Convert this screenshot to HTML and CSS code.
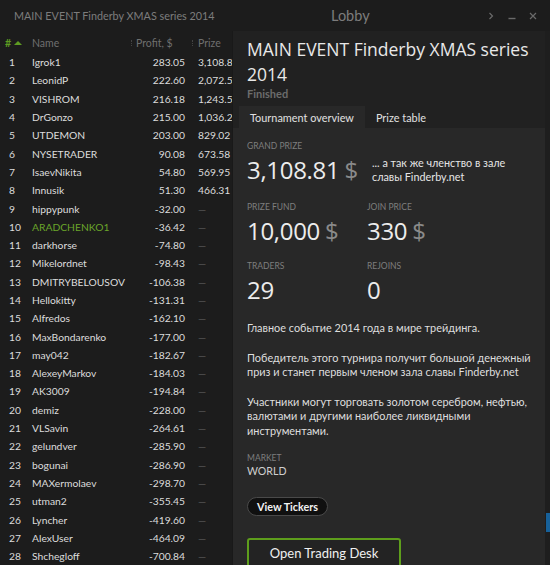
FILE: index.html
```html
<!DOCTYPE html>
<html lang="ru">
<head>
<meta charset="utf-8">
<title>Lobby</title>
<link rel="stylesheet" href="styles.css">
</head>
<body>
<div class="window">
  <header class="titlebar">
    <span class="tb-title">MAIN EVENT Finderby XMAS series 2014</span>
    <span class="tb-lobby">Lobby</span>
    <span class="tb-controls">
      <svg class="ctl" width="10" height="10" viewBox="0 0 10 10"><path d="M3.5 2 L6.5 5 L3.5 8" fill="none" stroke="#6a6a6a" stroke-width="1.2"/></svg>
      <svg class="ctl" width="10" height="10" viewBox="0 0 10 10"><path d="M1.5 7.5 H8.5" fill="none" stroke="#6a6a6a" stroke-width="1.4"/></svg>
      <svg class="ctl" width="10" height="10" viewBox="0 0 10 10"><path d="M2 2 L8 8 M8 2 L2 8" fill="none" stroke="#6a6a6a" stroke-width="1.2"/></svg>
    </span>
  </header>
  <div class="main">
    <section class="list">
      <div class="row head">
        <span class="c-num"><span class="hash">#</span><span class="tri"></span></span>
        <span class="c-name sep">Name</span>
        <span class="c-profit sep">Profit, $</span>
        <span class="c-prize sep">Prize</span>
      </div>
      <div class="row"><span class="c-num">1</span><span class="c-name">Igrok1</span><span class="c-profit">283.05</span><span class="c-prize">3,108.81</span></div>
      <div class="row"><span class="c-num">2</span><span class="c-name">LeonidP</span><span class="c-profit">222.60</span><span class="c-prize">2,072.54</span></div>
      <div class="row"><span class="c-num">3</span><span class="c-name">VISHROM</span><span class="c-profit">216.18</span><span class="c-prize">1,243.52</span></div>
      <div class="row"><span class="c-num">4</span><span class="c-name">DrGonzo</span><span class="c-profit">215.00</span><span class="c-prize">1,036.27</span></div>
      <div class="row"><span class="c-num">5</span><span class="c-name">UTDEMON</span><span class="c-profit">203.00</span><span class="c-prize">829.02</span></div>
      <div class="row"><span class="c-num">6</span><span class="c-name">NYSETRADER</span><span class="c-profit">90.08</span><span class="c-prize">673.58</span></div>
      <div class="row"><span class="c-num">7</span><span class="c-name">IsaevNikita</span><span class="c-profit">54.80</span><span class="c-prize">569.95</span></div>
      <div class="row"><span class="c-num">8</span><span class="c-name">Innusik</span><span class="c-profit">51.30</span><span class="c-prize">466.31</span></div>
      <div class="row"><span class="c-num">9</span><span class="c-name">hippypunk</span><span class="c-profit">-32.00</span><span class="c-prize dash">—</span></div>
      <div class="row me"><span class="c-num">10</span><span class="c-name">ARADCHENKO1</span><span class="c-profit">-36.42</span><span class="c-prize dash">—</span></div>
      <div class="row"><span class="c-num">11</span><span class="c-name">darkhorse</span><span class="c-profit">-74.80</span><span class="c-prize dash">—</span></div>
      <div class="row"><span class="c-num">12</span><span class="c-name">Mikelordnet</span><span class="c-profit">-98.43</span><span class="c-prize dash">—</span></div>
      <div class="row"><span class="c-num">13</span><span class="c-name">DMITRYBELOUSOV</span><span class="c-profit">-106.38</span><span class="c-prize dash">—</span></div>
      <div class="row"><span class="c-num">14</span><span class="c-name">Hellokitty</span><span class="c-profit">-131.31</span><span class="c-prize dash">—</span></div>
      <div class="row"><span class="c-num">15</span><span class="c-name">Alfredos</span><span class="c-profit">-162.10</span><span class="c-prize dash">—</span></div>
      <div class="row"><span class="c-num">16</span><span class="c-name">MaxBondarenko</span><span class="c-profit">-177.00</span><span class="c-prize dash">—</span></div>
      <div class="row"><span class="c-num">17</span><span class="c-name">may042</span><span class="c-profit">-182.67</span><span class="c-prize dash">—</span></div>
      <div class="row"><span class="c-num">18</span><span class="c-name">AlexeyMarkov</span><span class="c-profit">-184.03</span><span class="c-prize dash">—</span></div>
      <div class="row"><span class="c-num">19</span><span class="c-name">AK3009</span><span class="c-profit">-194.84</span><span class="c-prize dash">—</span></div>
      <div class="row"><span class="c-num">20</span><span class="c-name">demiz</span><span class="c-profit">-228.00</span><span class="c-prize dash">—</span></div>
      <div class="row"><span class="c-num">21</span><span class="c-name">VLSavin</span><span class="c-profit">-264.61</span><span class="c-prize dash">—</span></div>
      <div class="row"><span class="c-num">22</span><span class="c-name">gelundver</span><span class="c-profit">-285.90</span><span class="c-prize dash">—</span></div>
      <div class="row"><span class="c-num">23</span><span class="c-name">bogunai</span><span class="c-profit">-286.90</span><span class="c-prize dash">—</span></div>
      <div class="row"><span class="c-num">24</span><span class="c-name">MAXermolaev</span><span class="c-profit">-298.70</span><span class="c-prize dash">—</span></div>
      <div class="row"><span class="c-num">25</span><span class="c-name">utman2</span><span class="c-profit">-355.45</span><span class="c-prize dash">—</span></div>
      <div class="row"><span class="c-num">26</span><span class="c-name">Lyncher</span><span class="c-profit">-419.60</span><span class="c-prize dash">—</span></div>
      <div class="row"><span class="c-num">27</span><span class="c-name">AlexUser</span><span class="c-profit">-464.09</span><span class="c-prize dash">—</span></div>
      <div class="row"><span class="c-num">28</span><span class="c-name">Shchegloff</span><span class="c-profit">-700.84</span><span class="c-prize dash">—</span></div>
    </section>
    <section class="panel">
      <div class="panel-head">
        <h1 class="p-title">MAIN EVENT Finderby XMAS series 2014</h1>
        <div class="p-status">Finished</div>
        <nav class="tabs">
          <span class="tab active">Tournament overview</span>
          <span class="tab">Prize table</span>
        </nav>
      </div>
      <div class="panel-body">
        <div class="stat-row">
          <div class="stat">
            <div class="label">Grand prize</div>
            <div class="value">3,108.81<span class="cur">$</span></div>
          </div>
          <div class="side-note">... а так же членство в зале славы Finderby.net</div>
        </div>
        <div class="stat-grid">
          <div class="stat">
            <div class="label">Prize fund</div>
            <div class="value">10,000<span class="cur">$</span></div>
          </div>
          <div class="stat">
            <div class="label">Join price</div>
            <div class="value">330<span class="cur">$</span></div>
          </div>
          <div class="stat">
            <div class="label">Traders</div>
            <div class="value">29</div>
          </div>
          <div class="stat">
            <div class="label">Rejoins</div>
            <div class="value">0</div>
          </div>
        </div>
        <div class="desc">
          <p>Главное событие 2014 года в мире трейдинга.</p>
          <p>Победитель этого турнира получит большой денежный приз и станет первым членом зала славы Finderby.net</p>
          <p>Участники могут торговать золотом серебром, нефтью, валютами и другими наиболее ликвидными инструментами.</p>
        </div>
        <div class="market">
          <div class="label">Market</div>
          <div class="market-val">WORLD</div>
        </div>
        <button class="pill">View Tickers</button>
        <button class="primary">Open Trading Desk</button>
      </div>
    </section>
    <aside class="edge"><span class="thumb"></span></aside>
  </div>
</div>
</body>
</html>
```

FILE: styles.css
```css
* { box-sizing: border-box; }
html, body { margin: 0; padding: 0; }
body {
  background: #1c1c1c;
  font-family: "Lato", "Open Sans", sans-serif;
  color: #dcdcdc;
  width: 550px;
  height: 565px;
  overflow: hidden;
}
.window { display: flex; flex-direction: column; height: 565px; }

.titlebar {
  height: 31px;
  flex: none;
  display: flex;
  align-items: center;
  justify-content: space-between;
  padding: 0 12px 0 14px;
  color: #7c7c7c;
}
.tb-title { font-size: 10.8px; }
.tb-lobby { font-size: 14.5px; }
.tb-controls { display: flex; gap: 11px; align-items: center; }
.ctl { display: block; }

.main { flex: 1; display: flex; min-height: 0; }

.list {
  width: 232px;
  flex: none;
  overflow: hidden;
  font-size: 10.3px;
  padding-top: 1px;
}
.row {
  display: grid;
  grid-template-columns: 28px 104px 61px 39px;
  height: 18.3px;
  align-items: center;
  white-space: nowrap;
}
.row.head { height: 21px; color: #6f6f6f; font-size: 10.5px; }
.c-num { padding-left: 9px; }
.c-name { padding-left: 4px; overflow: hidden; }
.c-profit { text-align: right; padding-right: 8px; }
.c-prize { padding-left: 5px; overflow: visible; }
.head .c-profit { text-align: left; padding-left: 4px; padding-right: 0; }
.dash { color: #5a5a5a; }
.sep { position: relative; }
.sep::before {
  content: "";
  position: absolute;
  left: -1px;
  top: 3px;
  bottom: 3px;
  border-left: 1px dotted #444;
}
.head .c-num { padding-left: 5px; display: flex; align-items: center; gap: 3px; color: #5e9b22; font-weight: bold; }
.tri {
  width: 0; height: 0;
  border-left: 4px solid transparent;
  border-right: 4px solid transparent;
  border-bottom: 4px solid #5e9b22;
}
.me .c-name { color: #6aa52a; }

.panel {
  width: 313px;
  flex: none;
  display: flex;
  flex-direction: column;
  background: #282828;
  border-left: 1px solid #191919;
}
.panel-head { background: #212121; padding: 6px 0 0 0; }
.p-title {
  margin: 0;
  padding: 0 8px 0 14px;
  font-family: "Open Sans", sans-serif;
  font-size: 17.5px;
  line-height: 25px;
  font-weight: normal;
  color: #e8e8e8;
}
.p-status {
  padding-left: 14px;
  font-size: 11px;
  font-weight: bold;
  color: #6c6c6c;
  line-height: 14px;
}
.tabs { display: flex; padding-left: 6px; margin-top: 5px; }
.tab {
  font-size: 10.9px;
  padding: 0 11px;
  height: 22px;
  display: flex;
  align-items: center;
  color: #e0e0e0;
}
.tab.active { background: #282828; }

.panel-body { padding: 12px 4px 0 14px; flex: 1; }
.label {
  font-size: 8.5px;
  text-transform: uppercase;
  color: #7e7e7e;
  line-height: 12px;
}
.value {
  font-family: "Open Sans", sans-serif;
  font-size: 24px;
  line-height: 30px;
  margin-top: 3px;
  color: #ececec;
  letter-spacing: -0.3px;
}
.cur { color: #8a8a8a; margin-left: 5px; }
.stat-row { display: flex; align-items: flex-start; }
.stat-row .stat { width: 125px; flex: none; }
.side-note {
  font-size: 10.8px;
  line-height: 13.5px;
  width: 150px;
  margin-top: 16px;
  color: #e6e6e6;
}
.stat-grid {
  display: grid;
  grid-template-columns: 120px 120px;
  row-gap: 14px;
  margin-top: 16px;
}
.desc { margin-top: 16px; font-size: 10.9px; line-height: 14.5px; color: #dedede; width: 290px; }
.desc p { margin: 0 0 15px 0; }
.desc p:last-child { margin-bottom: 14px; }
.market-val { font-size: 10.6px; color: #cfcfcf; line-height: 14px; }
.pill {
  display: block;
  margin-top: 19px;
  height: 19px;
  padding: 0 9px;
  border-radius: 10px;
  border: 1px solid #4a4a4a;
  background: #101010;
  color: #f2f2f2;
  font-family: inherit;
  font-weight: bold;
  font-size: 10.8px;
}
.primary {
  display: block;
  margin-top: 22px;
  width: 154px;
  height: 30px;
  border: 2px solid #5e9e1c;
  border-radius: 3px;
  background: #232323;
  color: #f0f0f0;
  font-family: inherit;
  font-size: 13px;
}

.edge { width: 5px; flex: none; background: #1e1e1e; position: relative; }
.thumb {
  position: absolute;
  left: 1px;
  right: 0;
  top: 482px;
  height: 19px;
  background: #17619a;
}
```
